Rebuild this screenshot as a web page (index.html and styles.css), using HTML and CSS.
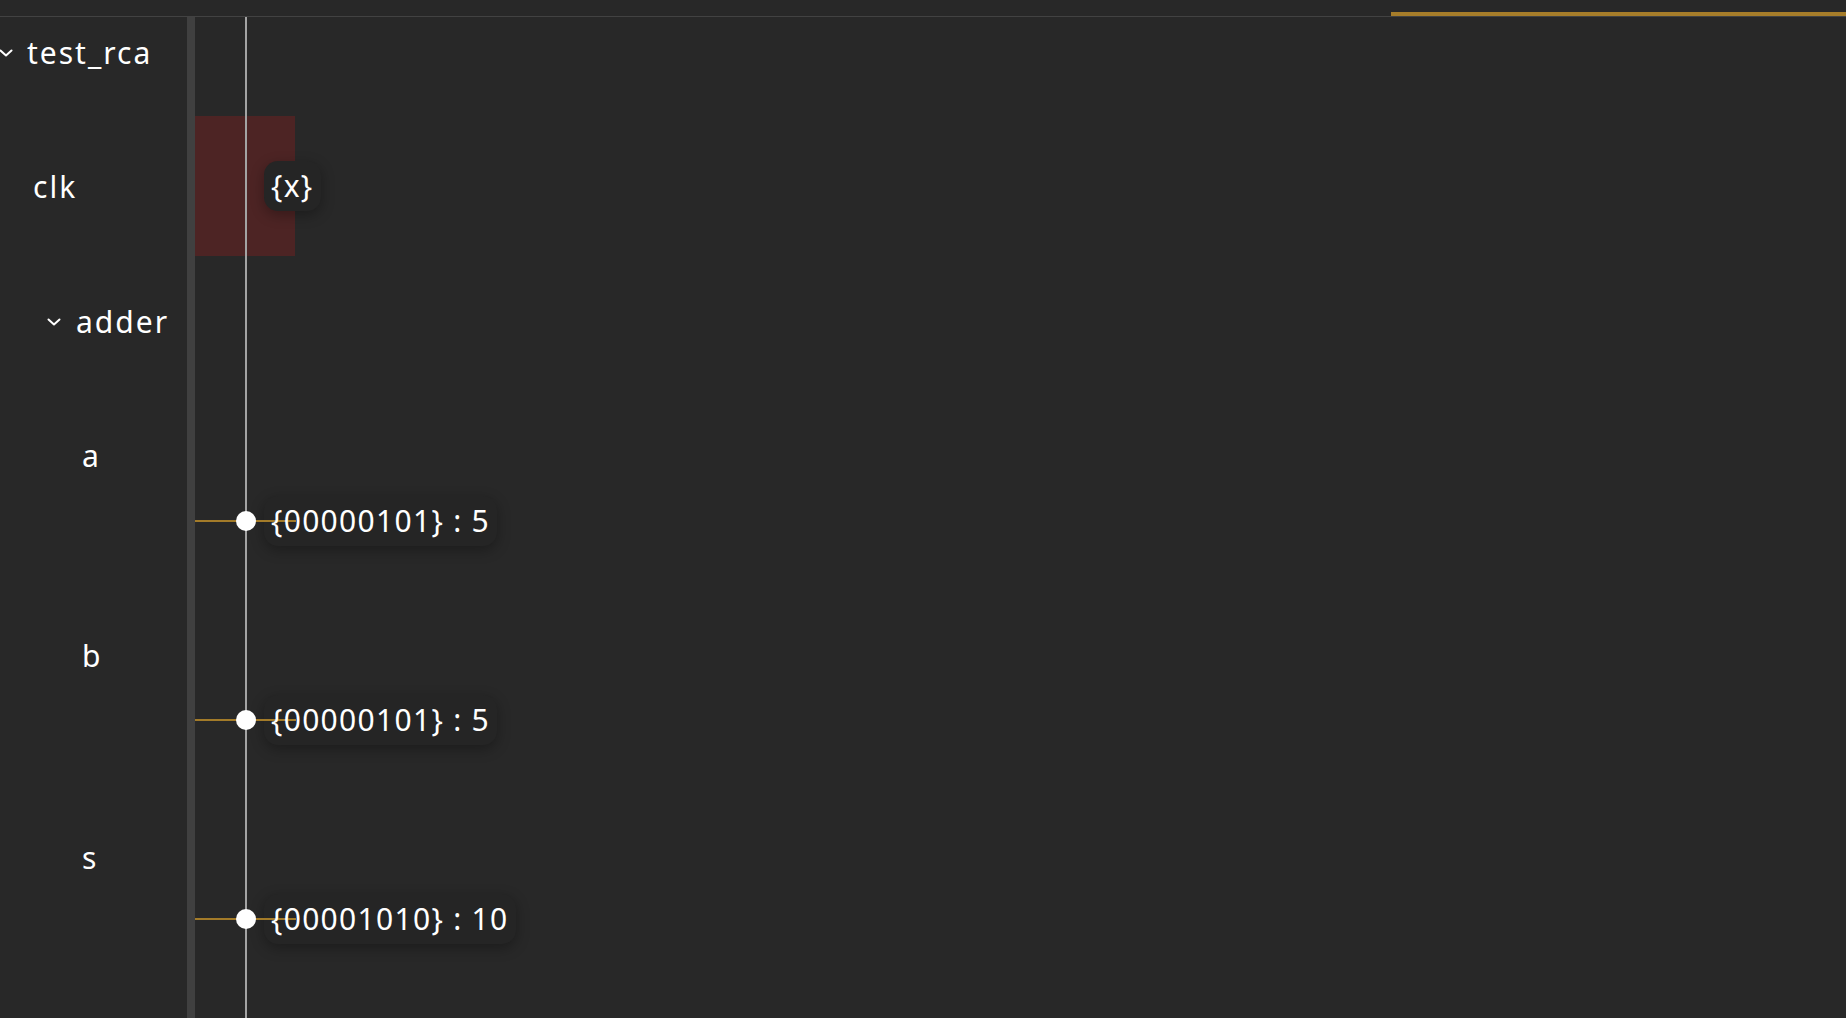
FILE: index.html
```html
<!DOCTYPE html>
<html>
<head>
<meta charset="utf-8">
<link rel="stylesheet" href="styles.css">
</head>
<body>
<div class="app">
  <div class="topbar"><div class="progress"></div></div>
  <div class="main">
    <div class="names">
      <div class="item item-root">
        <div class="row root">
          <svg class="chev" viewBox="0 0 14 8" width="14" height="8"><polyline points="1.5,1.5 7,6.5 12.5,1.5"/></svg>
          <span class="label">test_rca</span>
        </div>
      </div>
      <div class="item item-clk">
        <div class="row var1"><span class="label">clk</span></div>
      </div>
      <div class="item item-scope">
        <div class="row scope">
          <svg class="chev" viewBox="0 0 14 8" width="14" height="8"><polyline points="1.5,1.5 7,6.5 12.5,1.5"/></svg>
          <span class="label">adder</span>
        </div>
      </div>
      <div class="item item-a">
        <div class="row var2"><span class="label">a</span></div>
      </div>
      <div class="item item-b">
        <div class="row var2"><span class="label">b</span></div>
      </div>
      <div class="item">
        <div class="row var2"><span class="label">s</span></div>
      </div>
    </div>
    <div class="splitter"></div>
    <div class="canvas">
      <svg class="layer" width="1651" height="1001">
        <rect x="0" y="99" width="100" height="140" fill="#4d2424"/>
        <rect x="50" y="0" width="2" height="1001" fill="#a3a3a3"/>
      </svg>
      <div class="pill p-clk"><span class="val">{x}</span></div>
      <div class="pill p-a"><span class="val">{00000101} : 5</span></div>
      <div class="pill p-b"><span class="val">{00000101} : 5</span></div>
      <div class="pill p-s"><span class="val">{00001010} : 10</span></div>
      <svg class="layer" width="1651" height="1001">
        <rect x="0" y="503" width="101" height="2" fill="#a37b29"/>
        <rect x="0" y="702" width="101" height="2" fill="#a37b29"/>
        <rect x="0" y="901" width="101" height="2" fill="#a37b29"/>
        <circle cx="51" cy="504" r="10" fill="#ffffff"/>
        <circle cx="51" cy="703" r="10" fill="#ffffff"/>
        <circle cx="51" cy="902" r="10" fill="#ffffff"/>
      </svg>
    </div>
  </div>
</div>
</body>
</html>
```
FILE: styles.css
```css
html, body {
  margin: 0;
  padding: 0;
  background: #282828;
  overflow: hidden;
}
body {
  font-family: "Noto Sans", "Open Sans", sans-serif;
  color: #ffffff;
}
.app {
  width: 1846px;
  height: 1018px;
  display: flex;
  flex-direction: column;
}
.topbar {
  height: 16px;
  flex: none;
  border-bottom: 1px solid #424242;
  display: flex;
  justify-content: flex-end;
  align-items: flex-end;
}
.progress {
  width: 455px;
  height: 4px;
  background: #a67d2a;
}
.main {
  flex: 1;
  display: flex;
  min-height: 0;
}
.names {
  width: 187px;
  flex: none;
  overflow: hidden;
  box-sizing: border-box;
  padding-top: 16px;
  font-size: 30px;
  letter-spacing: 2px;
}
.item-root { height: 134px; }
.item-clk { height: 135px; }
.item-scope { height: 134px; }
.item-a { height: 200px; }
.item-b { height: 202px; }
.row {
  height: 40px;
  line-height: 40px;
  display: flex;
  align-items: center;
  white-space: nowrap;
}
.row.root { margin-left: -1px; }
.row.root .label { margin-left: 14px; }
.row.var1 { padding-left: 33px; }
.row.scope { padding-left: 47px; }
.row.scope .label { margin-left: 15px; }
.row.var2 { padding-left: 82px; }
.chev {
  flex: none;
  fill: none;
  stroke: #ffffff;
  stroke-width: 2;
  stroke-linecap: round;
  stroke-linejoin: round;
}
.splitter {
  width: 8px;
  flex: none;
  background: #404040;
}
.canvas {
  flex: 1;
  position: relative;
  overflow: hidden;
}
.layer {
  position: absolute;
  left: 0;
  top: 0;
  display: block;
}
.pill {
  position: absolute;
  height: 50px;
  line-height: 50px;
  padding: 0 7px;
  border-radius: 14px;
  background: #252525;
  box-shadow: 0 4px 14px rgba(0, 0, 0, 0.3);
  font-size: 30px;
  letter-spacing: 1.3px;
  white-space: nowrap;
}
.val {
  position: relative;
  z-index: 1;
}
.p-clk { left: 69px; top: 144px; }
.p-a { left: 69px; top: 479px; }
.p-b { left: 69px; top: 678px; }
.p-s { left: 69px; top: 877px; }
```
